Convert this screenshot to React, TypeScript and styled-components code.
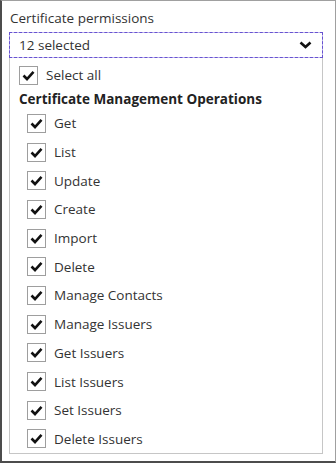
import React from "react";
import styled, { createGlobalStyle } from "styled-components";

const GlobalStyle = createGlobalStyle`
    html, body {
        margin: 0;
        padding: 0;
        background: #fff;
    }
    body {
        font-family: "Segoe UI", "Open Sans", "Noto Sans", sans-serif;
        color: #333;
    }
`;

const Frame = styled.div`
    box-sizing: border-box;
    width: 336px;
    height: 463px;
    border: 1px solid #a0a0a0;
    border-left: 2px solid #4c4c4c;
    border-bottom: 2px solid #4c4c4c;
    padding: 7px 12px 0 7px;
    display: flex;
    flex-direction: column;
`;

const Label = styled.div`
    font-size: 13.5px;
    line-height: 20px;
    color: #333;
    padding-left: 1px;
    margin-bottom: 4px;
`;

const Select = styled.div`
    box-sizing: border-box;
    height: 26px;
    border: 1px dashed #5a44c6;
    outline: 1px solid rgba(120, 100, 220, 0.45);
    outline-offset: -1px;
    display: flex;
    align-items: center;
    justify-content: space-between;
    padding: 0 10px 0 9px;
    font-size: 13.5px;
    color: #333;
`;

const Panel = styled.div`
    border: 1px solid #c6c6c6;
    border-top: none;
    padding: 7px 0 0 9px;
    display: flex;
    flex-direction: column;
`;

const Row = styled.label<{ $indent?: boolean }>`
    display: flex;
    align-items: center;
    gap: 8px;
    height: ${(p) => (p.$indent ? "28.7px" : "20px")};
    padding-left: ${(p) => (p.$indent ? "8px" : "0")};
    font-size: 13.5px;
    color: #333;
`;

const Heading = styled.div`
    font-size: 13.5px;
    font-weight: 700;
    line-height: 20px;
    color: #222;
    margin-top: 4px;
`;

const Box = styled.span`
    box-sizing: border-box;
    width: 19px;
    height: 19px;
    border: 1px solid #9e9e9e;
    display: flex;
    align-items: center;
    justify-content: center;
    flex-shrink: 0;
    background: #fff;
`;

const Check = () => (
    <Box>
        <svg width="13" height="11" viewBox="0 0 13 11">
            <path d="M1.5 5.5 L5 9 L11.5 1.8" fill="none" stroke="#111" strokeWidth="2.6" />
        </svg>
    </Box>
);

const operations = [
    "Get",
    "List",
    "Update",
    "Create",
    "Import",
    "Delete",
    "Manage Contacts",
    "Manage Issuers",
    "Get Issuers",
    "List Issuers",
    "Set Issuers",
    "Delete Issuers",
];

const App: React.FC = () => {
    return <>
        <GlobalStyle />
        <Frame>
            <Label>Certificate permissions</Label>
            <Select>
                <span>12 selected</span>
                <svg width="13" height="8" viewBox="0 0 13 8">
                    <path d="M1.5 1.5 L6.5 6 L11.5 1.5" fill="none" stroke="#111" strokeWidth="2.6" />
                </svg>
            </Select>
            <Panel>
                <Row>
                    <Check />
                    <span>Select all</span>
                </Row>
                <Heading>Certificate Management Operations</Heading>
                {operations.map((op) => (
                    <Row $indent key={op}>
                        <Check />
                        <span>{op}</span>
                    </Row>
                ))}
            </Panel>
        </Frame>
    </>
}

export default App;
